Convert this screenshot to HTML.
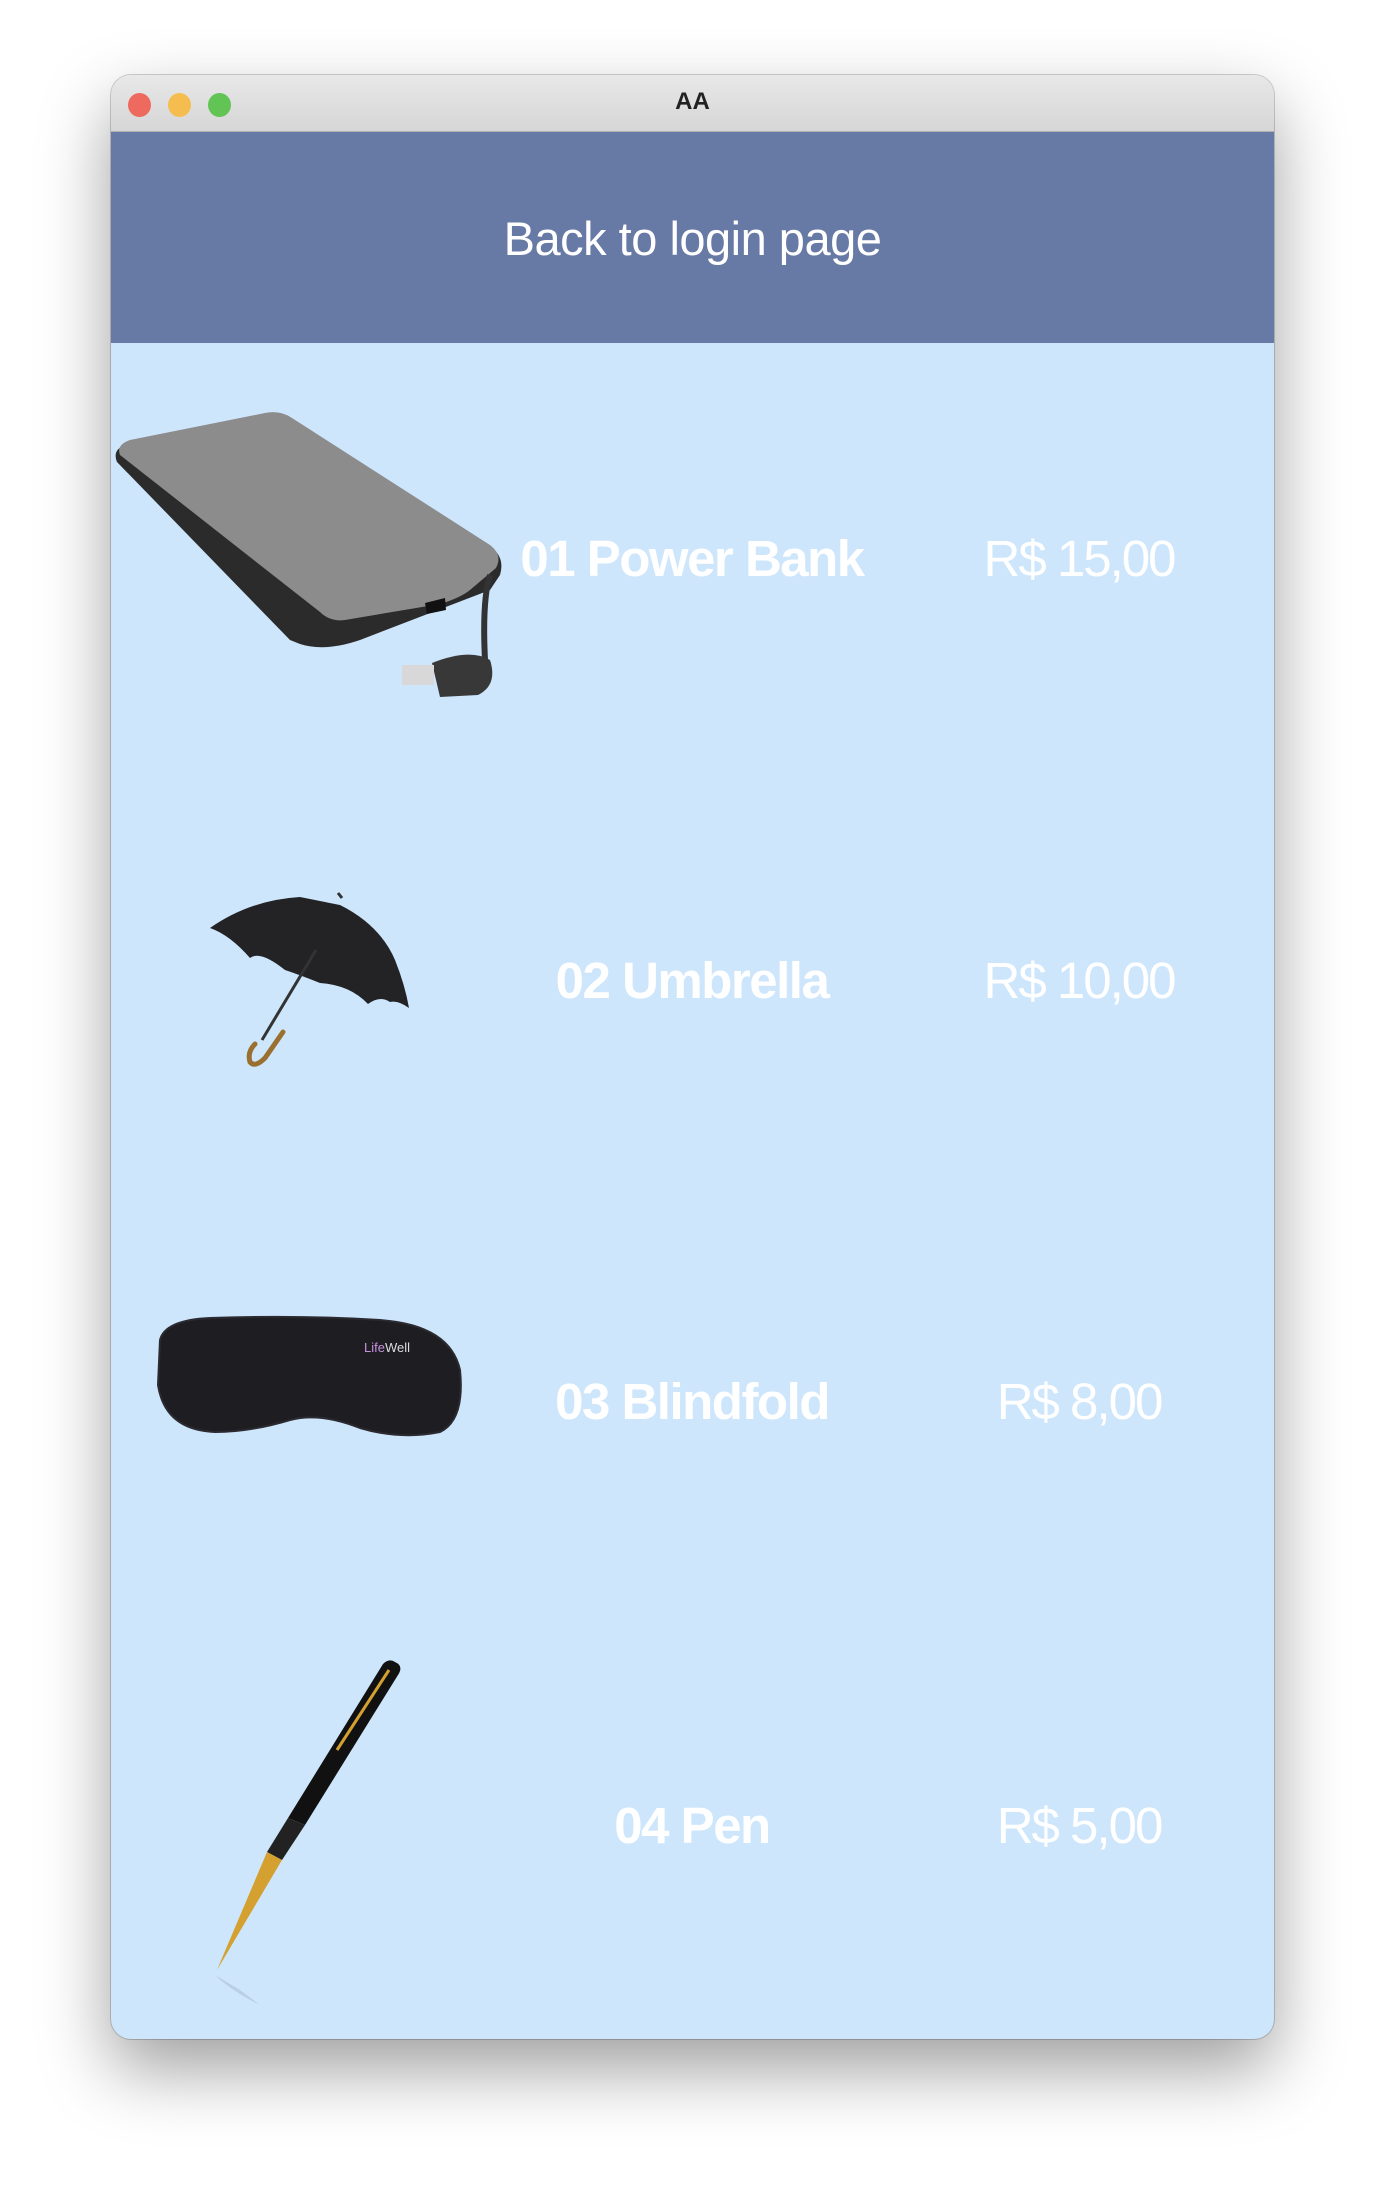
<!DOCTYPE html>
<html><head><meta charset="utf-8"><style>
html,body{margin:0;padding:0;width:1390px;height:2188px;background:#fff;overflow:hidden;font-family:"Liberation Sans",sans-serif;}
.win{position:absolute;left:111px;top:75px;width:1163px;height:1964px;border-radius:20px;overflow:hidden;background:#cde6fc;box-shadow:0 30px 70px rgba(0,0,0,.38),0 0 0 1px rgba(0,0,0,.18);}
.tb{position:absolute;left:0;top:0;width:100%;height:56px;background:linear-gradient(#e8e8e8,#d6d6d6);border-bottom:1px solid #b0b0b0;}
.dot{position:absolute;top:18px;width:23px;height:24px;border-radius:50%;}
.ttl{position:absolute;left:0;right:0;top:13px;text-align:center;font-weight:bold;font-size:24px;color:#222;}
.hdr{position:absolute;left:0;top:57px;width:100%;height:211px;background:#6779a5;}
.hdr span{position:absolute;left:0;right:0;top:79px;text-align:center;color:#fff;font-size:47px;letter-spacing:-0.5px;}
.t{position:absolute;color:#fff;font-size:51px;white-space:nowrap;letter-spacing:-1.5px;}
.n{font-weight:bold;width:500px;left:331px;text-align:center;}
.p{width:300px;left:818px;text-align:center;letter-spacing:-2px;}
svg{position:absolute;left:0;top:0;}
</style></head><body>
<div class="win">
<div class="tb"><div class="dot" style="left:17px;background:#ee6a5e;"></div><div class="dot" style="left:57px;background:#f5bd4f;"></div><div class="dot" style="left:97px;background:#61c454;"></div><div class="ttl">AA</div></div>
<div class="hdr"><span>Back to login page</span></div>
<div class="t n" style="top:454px">01 Power Bank</div>
<div class="t p" style="top:454px">R$ 15,00</div>
<div class="t n" style="top:876px">02 Umbrella</div>
<div class="t p" style="top:876px">R$ 10,00</div>
<div class="t n" style="top:1297px">03 Blindfold</div>
<div class="t p" style="top:1297px">R$ 8,00</div>
<div class="t n" style="top:1721px">04 Pen</div>
<div class="t p" style="top:1721px">R$ 5,00</div>
</div>
<svg width="1390" height="2188" viewBox="0 0 1390 2188">
<path d="M117 462 Q112 450 125 445 L262 414 Q278 411 290 418 L492 548 Q505 558 500 575 L490 590 L360 640 Q325 652 300 644 L290 640 Z" fill="#2b2b2b"/>
<path d="M120 455 Q116 445 130 440 L265 413 Q280 410 292 418 L490 545 Q503 555 496 568 L470 590 Q460 598 440 604 L345 620 Q330 622 320 612 Z" fill="#8c8c8c"/>
<path d="M425 603 L445 598 L446 610 L427 614 Z" fill="#111"/>
<path d="M490 575 Q482 600 485 660" stroke="#333" stroke-width="6" fill="none"/>
<path d="M432 663 Q470 648 490 660 Q498 685 478 695 L440 697 Z" fill="#383838"/>
<rect x="402" y="665" width="32" height="20" fill="#d8d8d8"/>
<path d="M210 928 Q250 900 300 897 Q330 903 340 905 Q380 925 395 960 Q405 985 409 1008 Q398 1000 390 1002 Q380 995 368 1004 Q350 985 320 983 Q300 975 285 970 Q260 950 250 958 Q230 935 210 928 Z" fill="#232325"/>
<path d="M338 893 L342 898 M316 950 L262 1040" stroke="#333" stroke-width="3" fill="none"/>
<path d="M283 1032 L265 1058 Q255 1068 250 1062 Q247 1052 255 1044" stroke="#9a7030" stroke-width="5" fill="none" stroke-linecap="round"/>
<path d="M160 1340 Q165 1320 210 1318 Q300 1315 380 1320 Q450 1325 460 1370 Q465 1420 440 1432 Q400 1440 360 1428 Q320 1412 290 1420 Q250 1432 215 1432 Q165 1430 158 1385 Z" fill="#1d1d22" stroke="#2a2a30" stroke-width="2"/>
<text x="364" y="1352" font-family="Liberation Sans,sans-serif" font-size="13" fill="#c890e0">Life<tspan fill="#ddd">Well</tspan></text>
<path d="M395 1662 Q404 1666 398 1675 L305 1825 L288 1818 L383 1664 Q389 1658 395 1662 Z" fill="#111"/>
<path d="M389 1670 L337 1750" stroke="#d4a030" stroke-width="3"/>
<path d="M305 1825 L288 1818 L267 1852 L282 1860 Z" fill="#222"/>
<path d="M267 1852 L282 1860 L217 1970 Z" fill="#d4a030"/>
<path d="M215 1975 L240 1990 L260 2005 Q230 1990 215 1975 Z" fill="#aab8cc" opacity=".5"/>
</svg>
</body></html>
